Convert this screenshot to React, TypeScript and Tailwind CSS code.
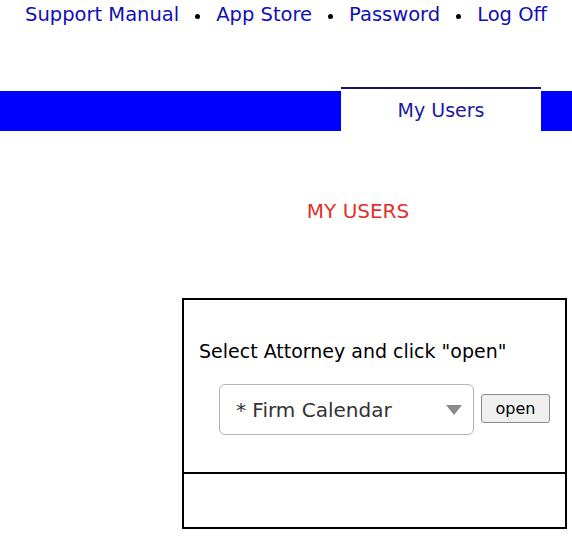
import { useState } from "react"

const links = ["Support Manual", "App Store", "Password", "Log Off"]

export default function App() {
  const [attorney, setAttorney] = useState("firm")

  return (
    <div className="min-h-screen bg-white font-['DejaVu_Sans',Verdana,sans-serif]">
      {/* Top links */}
      <div className="flex justify-center items-center h-[30px] text-[19.5px] text-[#0f0fb4]">
        {links.map((l, i) => (
          <span key={l} className="flex items-center">
            {i > 0 && <span className="inline-block w-[5px] h-[5px] rounded-full bg-black mx-[16px] mt-[2px]" />}
            <a href="#" className="leading-none">{l}</a>
          </span>
        ))}
      </div>

      {/* Tab bar */}
      <div className="mt-[57px] flex items-end h-[44px]">
        <div className="flex-1 h-[40px] bg-[#0000ff]" />
        <div className="w-[200px] h-[44px] bg-white border-t-2 border-[#16166a] flex items-center justify-center text-[19px] text-[#1a1aa0]">
          My Users
        </div>
        <div className="w-[31px] h-[40px] bg-[#0000ff]" />
      </div>

      {/* Heading */}
      <div className="mt-[70px] pl-[144px] text-center text-[20px] text-[#e0302a] leading-none">
        MY USERS
      </div>

      {/* Box */}
      <div className="mt-[77px] ml-[182px] w-[385px] border-2 border-black">
        <div className="h-[172px] pt-[42px] pl-[15px]">
          <p className="text-[19px] text-black leading-none">Select Attorney and click "open"</p>
          <div className="mt-[23px] ml-[20px] flex items-center gap-[7px]">
            <div className="relative">
              <select
                value={attorney}
                onChange={(e) => setAttorney(e.target.value)}
                className="appearance-none w-[255px] h-[51px] rounded-[6px] border border-[#b4b4b4] bg-white pl-[16px] text-[20px] text-[#333]"
              >
                <option value="firm">* Firm Calendar</option>
              </select>
              <span className="pointer-events-none absolute right-[12px] top-[21px] w-0 h-0 border-l-[8px] border-r-[8px] border-t-[10px] border-l-transparent border-r-transparent border-t-[#8a8a8a]" />
            </div>
            <button className="w-[69px] h-[29px] mt-[-2px] rounded-[3px] border border-[#8a8a8a] bg-[#efefef] text-[16px] text-black leading-none">
              open
            </button>
          </div>
        </div>
        <div className="h-[55px] border-t-2 border-black" />
      </div>
    </div>
  )
}
